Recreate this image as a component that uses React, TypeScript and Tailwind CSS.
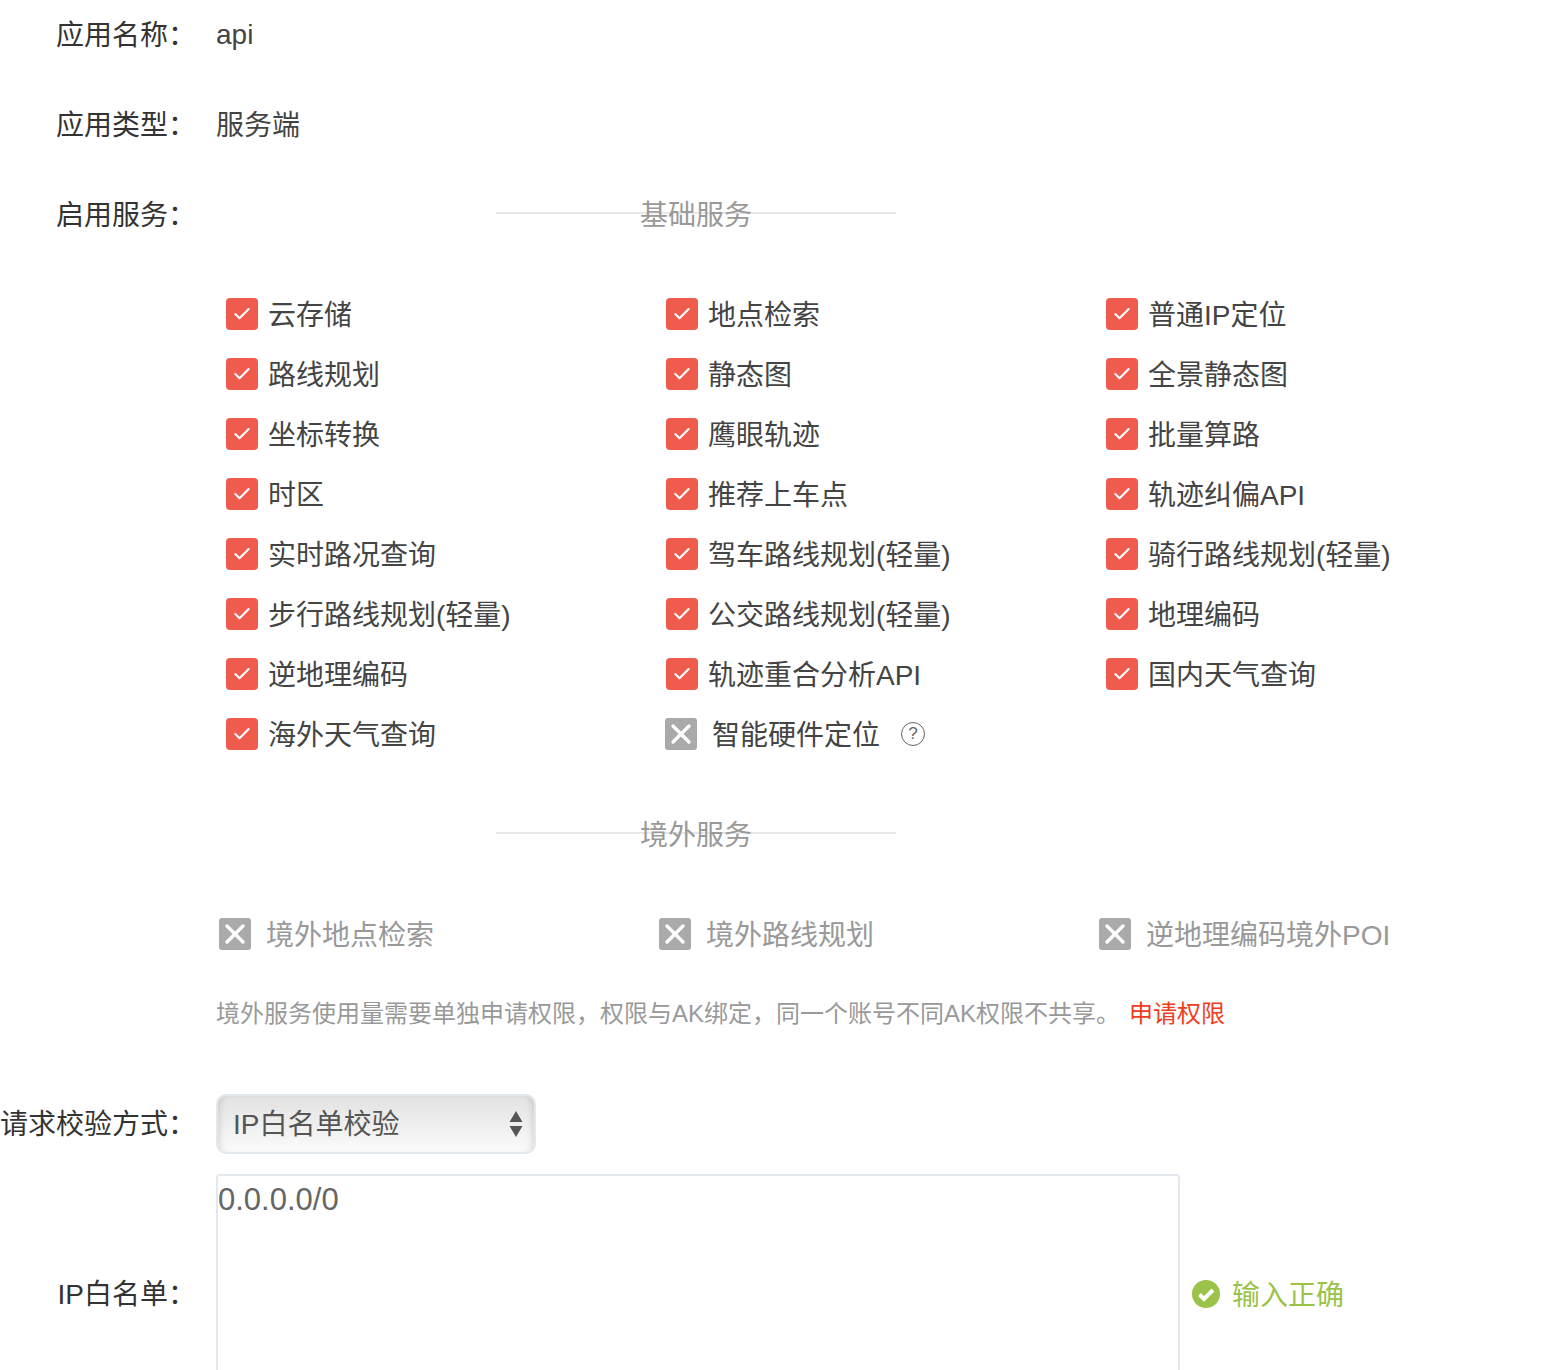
import { Check, X } from "lucide-react";

const basic = [
  ["云存储", "地点检索", "普通IP定位"],
  ["路线规划", "静态图", "全景静态图"],
  ["坐标转换", "鹰眼轨迹", "批量算路"],
  ["时区", "推荐上车点", "轨迹纠偏API"],
  ["实时路况查询", "驾车路线规划(轻量)", "骑行路线规划(轻量)"],
  ["步行路线规划(轻量)", "公交路线规划(轻量)", "地理编码"],
  ["逆地理编码", "轨迹重合分析API", "国内天气查询"],
  ["海外天气查询"],
];

const overseas = ["境外地点检索", "境外路线规划", "逆地理编码境外POI"];

function Label({ children }: { children: React.ReactNode }) {
  return (
    <div className="mr-5 w-[196px] shrink-0 whitespace-nowrap text-right text-[28px] leading-10 text-[#333]">
      {children}：
    </div>
  );
}

function Checked({ text }: { text: string }) {
  return (
    <div className="flex h-[60px] w-[440px] items-center pl-2.5">
      <span className="flex h-8 w-8 items-center justify-center rounded-[4px] bg-[#ef5b4c]">
        <Check className="h-5 w-5 text-white" strokeWidth={2.5} />
      </span>
      <span className="ml-2.5 pt-1 text-[28px] text-[#444]">{text}</span>
    </div>
  );
}

function Disabled({ text }: { text: string }) {
  return (
    <div className="flex h-[60px] w-[440px] items-center pl-[3px]">
      <span className="flex h-8 w-8 items-center justify-center rounded-[3px] bg-[#aaa]">
        <X className="h-8 w-8 text-white" strokeWidth={2.5} />
      </span>
      <span className="ml-[15px] pt-1 text-[28px] text-[#999]">{text}</span>
    </div>
  );
}

function Divider({ text }: { text: string }) {
  return (
    <div className="relative flex h-10 w-[400px] items-center justify-center">
      <div className="h-[2px] w-full bg-[#e8e8e8]" />
      <span className="absolute translate-y-[3px] text-[28px] text-[#999]">{text}</span>
    </div>
  );
}

export default function App() {
  return (
    <div
      className="h-[1370px] overflow-hidden bg-white"
      style={{ fontFamily: '"Liberation Sans", "Noto Sans CJK SC", sans-serif' }}
    >
      <div className="flex h-[90px] items-start pt-4">
        <Label>应用名称</Label>
        <div className="-mt-px text-[28px] leading-10 text-[#444]">api</div>
      </div>
      <div className="flex h-[90px] items-start pt-4">
        <Label>应用类型</Label>
        <div className="text-[28px] leading-10 text-[#444]">服务端</div>
      </div>
      <div className="flex h-[104px] items-start pt-4">
        <Label>启用服务</Label>
        <div className="ml-[280px] -mt-[3px]">
          <Divider text="基础服务" />
        </div>
      </div>

      <div className="ml-[216px]">
        {basic.map((row) => (
          <div key={row[0]} className="flex">
            {row.map((text) => (
              <Checked key={text} text={text} />
            ))}
            {row.length === 1 && (
              <div className="flex h-[60px] items-center pl-[9px]">
                <span className="flex h-8 w-8 items-center justify-center rounded-[3px] bg-[#aaa]">
                  <X className="h-8 w-8 text-white" strokeWidth={2.5} />
                </span>
                <span className="ml-[15px] pt-1 text-[28px] text-[#444]">智能硬件定位</span>
                <span className="ml-[21px] flex h-6 w-6 items-center justify-center rounded-full border-[1.5px] border-[#666] text-[17px] text-[#666]">
                  ?
                </span>
              </div>
            )}
          </div>
        ))}
      </div>

      <div className="ml-[496px] mt-[49px]">
        <Divider text="境外服务" />
      </div>

      <div className="ml-[216px] mt-[51px] flex">
        {overseas.map((text) => (
          <Disabled key={text} text={text} />
        ))}
      </div>

      <div className="ml-[216px] mt-[30px] flex h-10 items-center text-2xl text-[#999]">
        <span>境外服务使用量需要单独申请权限，权限与AK绑定，同一个账号不同AK权限不共享。</span>
        <span className="ml-[9px] text-[#f03c1e]">申请权限</span>
      </div>

      <div className="mt-[60px] flex h-[60px] items-center">
        <div className="pt-0.5">
          <Label>请求校验方式</Label>
        </div>
        <div className="relative h-[60px] w-[320px]">
          <select className="h-full w-full appearance-none rounded-[10px] border-2 border-[#e3e8ee] bg-gradient-to-b from-[#e2e2e2] to-[#fbfbfb] px-[15px] pt-0.5 text-[28px] text-[#555] shadow-[inset_6px_0_6px_-4px_rgba(0,0,0,0.12),inset_-6px_0_6px_-4px_rgba(0,0,0,0.12)]">
            <option>IP白名单校验</option>
          </select>
          <svg className="absolute right-[13px] top-[15px] h-[30px] w-[14px]" viewBox="0 0 14 30">
            <path d="M7 2 L13.5 13 H0.5 Z M0.5 17 H13.5 L7 28 Z" fill="#555" />
          </svg>
        </div>
      </div>

      <div className="mt-5 flex h-[240px] items-center">
        <div className="pt-0.5">
          <Label>IP白名单</Label>
        </div>
        <textarea
          className="h-[240px] w-[964px] resize-none rounded-[4px] border-2 border-[#e3e8ee] pt-1 text-[31px] leading-10 text-[#666]"
          defaultValue="0.0.0.0/0"
        />
        <div className="ml-[11px] flex items-center">
          <svg className="h-[30px] w-[30px]" viewBox="0 0 30 30">
            <circle cx="15" cy="15" r="14" fill="#9bc34a" />
            <path d="M8.5 15.5 L13 20 L22 11" fill="none" stroke="#fff" strokeWidth="4" />
          </svg>
          <span className="ml-[11px] pt-1 text-[28px] text-[#9bc34a]">输入正确</span>
        </div>
      </div>
    </div>
  );
}
